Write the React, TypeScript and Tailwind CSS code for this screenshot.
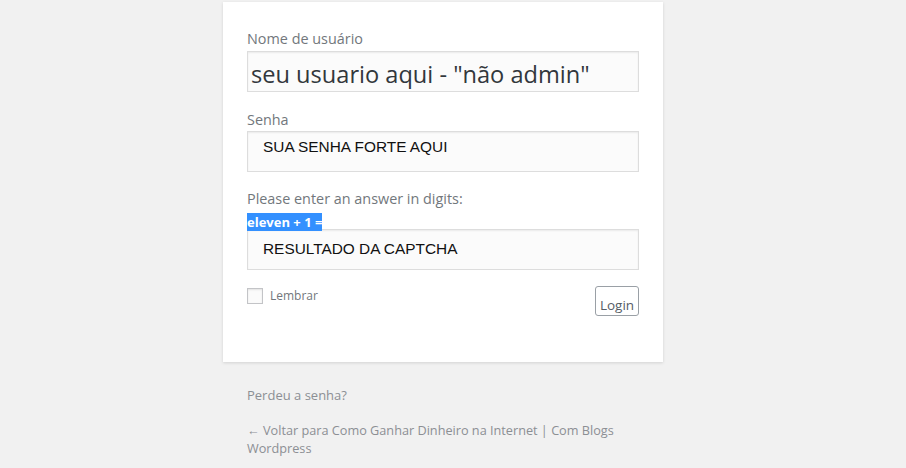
export default function App() {
  const sans = { fontFamily: '"Open Sans", "Noto Sans", sans-serif' }
  const arial = { fontFamily: '"Liberation Sans", Arial, sans-serif' }

  return (
    <div className="min-h-[468px] w-full bg-[#f1f1f1]" style={sans}>
      <div className="ml-[223px] w-[440px] pt-[2px]">
        {/* Login card */}
        <div className="bg-white px-[24px] pt-[27px] pb-[46px] shadow-[0_1px_3px_rgba(0,0,0,0.13)]">
          <div className="text-[14.4px] leading-[20px] text-[#72777c]">Nome de usuário</div>
          <div className="mt-[2px] h-[41px] border border-[#dddddd] bg-[#fbfbfb] pl-[3px] pt-[6px] shadow-[inset_0_1px_2px_rgba(0,0,0,0.07)]">
            <div className="text-[23.6px] leading-[32px] text-[#32373c]">seu usuario aqui - "não admin"</div>
          </div>

          <div className="mt-[18px] text-[14.4px] leading-[20px] text-[#72777c]">Senha</div>
          <div className="mt-[1px] h-[41px] border border-[#dddddd] bg-[#fbfbfb] pl-[15px] pt-[6px] shadow-[inset_0_1px_2px_rgba(0,0,0,0.07)]">
            <div className="text-[15.4px] leading-[17px] text-[#111]" style={arial}>
              SUA SENHA FORTE AQUI
            </div>
          </div>

          <div className="mt-[17px] text-[14.4px] leading-[20px] text-[#72777c]">Please enter an answer in digits:</div>
          <div className="h-[18px]">
            <span className="inline-block bg-[#3390ff] text-[13px] font-bold leading-[18px] text-white">eleven + 1 =</span>
          </div>
          <div className="mt-[2px] h-[41px] border border-[#dddddd] bg-[#fbfbfb] pl-[15px] pt-[10px] shadow-[inset_0_1px_2px_rgba(0,0,0,0.07)]">
            <div className="text-[15.4px] leading-[17px] text-[#111]" style={arial}>
              RESULTADO DA CAPTCHA
            </div>
          </div>

          <div className="mt-[16px] flex items-start justify-between">
            <div className="mt-[2px] flex items-start gap-[7px]">
              <div className="h-[16px] w-[16px] border border-[#c3c4c7] bg-[#fbfbfb] shadow-[inset_0_1px_2px_rgba(0,0,0,0.1)]" />
              <span className="text-[12px] leading-[16px] text-[#72777c]">Lembrar</span>
            </div>
            <div className="h-[30px] w-[44px] rounded-[3px] border border-[#9aa0a6] bg-white pt-[10px] text-center text-[13.5px] leading-[16px] text-[#555d66]">
              Login
            </div>
          </div>
        </div>

        {/* Links below card */}
        <div className="px-[24px]">
          <div className="mt-[23px] text-[13px] leading-[20px] text-[#8c8f94]">Perdeu a senha?</div>
          <div className="mt-[16px] text-[12.7px] leading-[18px] text-[#8c8f94]">
            ← Voltar para Como Ganhar Dinheiro na Internet | Com Blogs Wordpress
          </div>
        </div>
      </div>
    </div>
  )
}
